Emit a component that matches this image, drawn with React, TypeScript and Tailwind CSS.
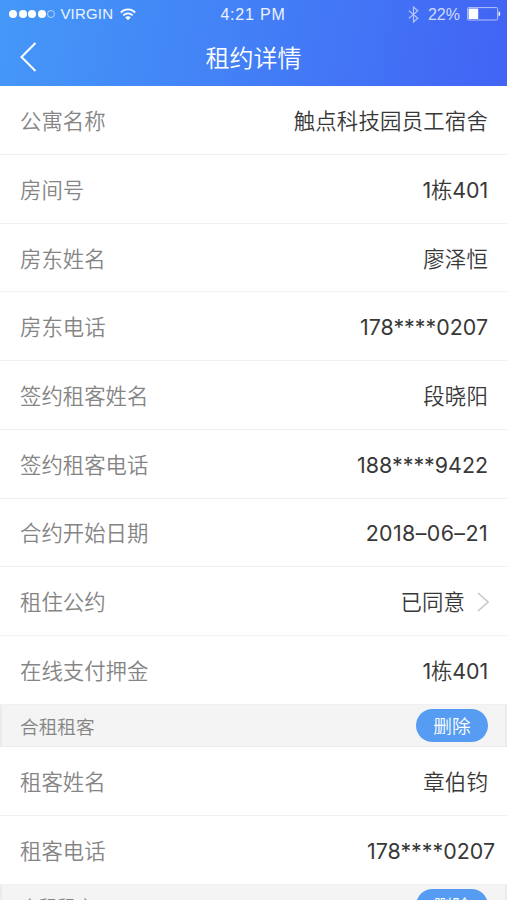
import { useState, type ReactNode } from "react";

type Row = {
  label: string;
  value: ReactNode;
  valueClass?: string;
  link?: boolean;
};

const room = (
  <span className="tracking-[-0.1px]">
    1<span className="font-[350]">栋</span>401
  </span>
);

const leaseRows: Row[] = [
  { label: "公寓名称", value: "触点科技园员工宿舍", valueClass: "font-[350] tracking-[0.2px]" },
  { label: "房间号", value: room },
  { label: "房东姓名", value: "廖泽恒", valueClass: "font-[350] tracking-[0.2px]" },
  { label: "房东电话", value: "178****0207" },
  { label: "签约租客姓名", value: "段晓阳", valueClass: "font-[350] tracking-[0.2px]" },
  { label: "签约租客电话", value: "188****9422" },
  { label: "合约开始日期", value: "2018–06–21", valueClass: "tracking-[0.4px]" },
  { label: "租住公约", value: "已同意", valueClass: "font-[350] tracking-[0.1px]", link: true },
  { label: "在线支付押金", value: room },
];

const roommates = [
  { id: 1, name: "章伯钧", phone: "178****0207" },
  { id: 2, name: "章伯钧", phone: "178****0207" },
];

function WifiIcon() {
  return (
    <svg width="16" height="13" viewBox="0 0 16 13" fill="none" stroke="white" strokeWidth="1.8">
      <path d="M.8 4.5C4.9.3 11.1.3 15.2 4.5" />
      <path d="M3.3 7.3c2.7-2.7 6.7-2.7 9.4 0" />
      <path d="M8 12.2 5.2 9.4c1.5-1.5 4.1-1.5 5.6 0z" fill="white" stroke="none" />
    </svg>
  );
}

function BluetoothIcon() {
  return (
    <svg width="11" height="17" viewBox="0 0 11 17" fill="none" stroke="white" strokeOpacity="0.6" strokeWidth="1.2">
      <path d="M.8 4.6 9.8 12.2 5.5 16V1l4.3 3.8-9 7.6" />
    </svg>
  );
}

function BatteryIcon() {
  return (
    <svg width="34" height="14" viewBox="0 0 34 14" fill="none">
      <rect x=".6" y=".6" width="30" height="12.4" rx="1" stroke="white" strokeOpacity="0.6" />
      <rect x="1.6" y="1.6" width="9.6" height="10.4" fill="white" />
      <path d="M31.6 4.3c2.2.5 2.2 4.5 0 5z" fill="white" />
    </svg>
  );
}

function StatusBar() {
  return (
    <div className="grid h-7 grid-cols-3 items-center pl-[9px] pr-[6px] font-['Liberation_Sans',sans-serif] text-[16px] text-white/90">
      <div className="flex items-center">
        <div className="flex items-center gap-[1.6px]">
          {[0, 1, 2, 3].map((n) => (
            <span key={n} className="size-2 rounded-full bg-white" />
          ))}
          <span className="size-2 rounded-full border border-white/60" />
        </div>
        <span className="ml-[5px] mr-[7px] pt-px text-[15px] tracking-[0.2px]">VIRGIN</span>
        <WifiIcon />
      </div>
      <span className="pt-px pr-[4px] text-center tracking-[0.8px]">4:21 PM</span>
      <div className="flex items-center justify-end">
        <BluetoothIcon />
        <span className="ml-[9px] mr-[7px] pt-px text-white/75">22%</span>
        <BatteryIcon />
      </div>
    </div>
  );
}

function InfoRow({ label, value, valueClass, link }: Row) {
  return (
    <div className="flex h-[68.7px] shrink-0 items-center justify-between border-b-[1.5px] border-[#f0f0f0] pt-[2px] pl-5 pr-[19px] text-[21.4px]">
      <span className="font-[350] text-[#858585]">{label}</span>
      <span className={`flex items-center text-[#383838] ${valueClass ?? ""}`}>
        {value}
        {link && (
          <svg className="ml-3 mr-[-1px]" width="12" height="20" viewBox="0 0 12 20" fill="none" stroke="#c8c8c8" strokeWidth="1.6">
            <path d="m1 1 10 9-10 9" />
          </svg>
        )}
      </span>
    </div>
  );
}

export default function App() {
  const [tenants, setTenants] = useState(roommates);

  return (
    <div className="flex h-[900px] w-[507px] flex-col overflow-hidden bg-white font-['Inter','Noto_Sans_CJK_SC',sans-serif]">
      {/* Header */}
      <header className="h-[86px] shrink-0 bg-linear-100 from-[#4598f8] to-[#4263f4] text-white">
        <StatusBar />
        <div className="grid h-[58px] grid-cols-[60px_1fr_60px] items-center">
          <button className="pl-5" aria-label="返回">
            <svg width="17" height="30" viewBox="0 0 17 30" fill="none" stroke="white" strokeWidth="2">
              <path d="M15.5 1 1.5 15l14 14" />
            </svg>
          </button>
          <h1 className="pt-1 text-center text-[24px] font-[350]">租约详情</h1>
        </div>
      </header>

      {/* Lease details */}
      <section className="shrink-0 pt-[0.4px]">
        {leaseRows.map((row) => (
          <InfoRow key={row.label} {...row} />
        ))}
      </section>

      {/* Roommates */}
      {tenants.map((t) => (
        <section key={t.id} className="shrink-0">
          <div className="flex h-[42.8px] items-center justify-between border-x-2 border-b border-[#ebebeb] bg-[#f4f4f4] pl-[18px] pr-[17px]">
            <span className="pt-[5px] text-[18.7px] font-[350] text-[#858585]">合租租客</span>
            <button
              onClick={() => setTenants(tenants.filter((x) => x.id !== t.id))}
              className="flex h-[33px] w-[72px] items-center justify-center rounded-full bg-[#559cf2] pt-[3px] text-[18.7px] font-[350] text-white"
            >
              删除
            </button>
          </div>
          <InfoRow label="租客姓名" value={t.name} valueClass="font-[350] tracking-[0.2px]" />
          <InfoRow label="租客电话" value={t.phone} valueClass="mr-[-7px]" />
        </section>
      ))}
    </div>
  );
}
